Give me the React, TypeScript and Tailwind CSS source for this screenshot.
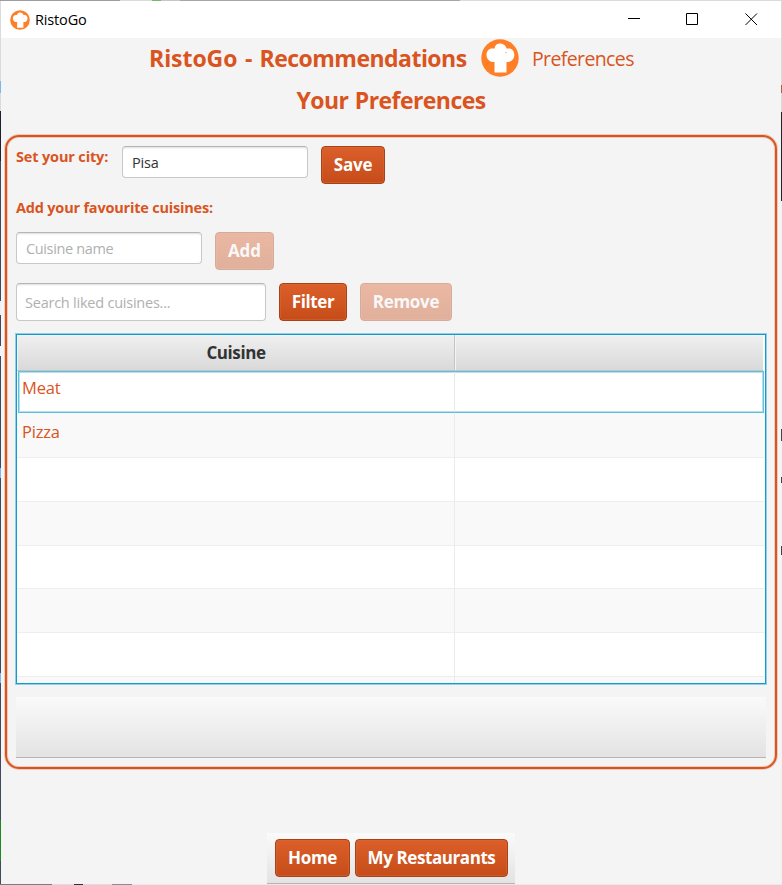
import type { ReactNode } from "react";

function ChefLogo({ className }: { className: string }) {
  return (
    <svg className={className} viewBox="0 0 38 38">
      <circle cx="19" cy="19" r="18.7" fill="#ff7f27" />
      <path
        fill="#fff"
        d="M13.500 33.500V23H11C8 22 5.500 19.500 5.500 16C5.500 12 8 9.500 11 9.500H13.500C14 6.500 16 4.600 19 4.600C22.500 4.600 25 7 25.500 9.500H28C31 9.500 33.300 12 33.300 16C33.300 19.500 31 22.300 27.500 23H25.500V33.500Z"
      />
      <path d="M24.500 13.500h1" stroke="#ff7f27" strokeWidth="1" />
    </svg>
  );
}

const field =
  "border border-[#c8c8c8] border-t-[#b5b5b5] rounded-[4px] bg-white shadow-[inset_0_2px_2px_-1px_#dedede] flex items-center outline-none placeholder:text-[#b0b0b0] text-[#333] text-[14.5px]";

function Btn({ children, className, disabled }: { children: ReactNode; className: string; disabled?: boolean }) {
  return (
    <button
      disabled={disabled}
      className={`h-[38px] shrink-0 whitespace-nowrap rounded-[4px] border border-[#a5421a] bg-linear-to-b from-[#dc5f2a] to-[#c54c19] pb-px text-[17px] font-bold text-white shadow-[inset_0_0_0_1px_#dd673480] disabled:opacity-40 ${className}`}
    >
      {children}
    </button>
  );
}

const rows = [
  { name: "Meat", style: "h-[42px] bg-white" },
  { name: "Pizza", style: "h-[45px] bg-[#f9f9f9] pt-[3px]" },
  { name: "", style: "h-[44px] bg-white" },
  { name: "", style: "h-[44px] bg-[#f9f9f9]" },
  { name: "", style: "h-[43px] bg-white" },
  { name: "", style: "h-[44px] bg-[#f9f9f9]" },
  { name: "", style: "h-[44px] bg-white" },
  { name: "", style: "h-[7px] bg-[#f9f9f9]" },
];

export default function App() {
  return (
    <div className="flex h-[885px] w-[782px] flex-col overflow-hidden bg-[#d9dbdf] font-['Open_Sans','Noto_Sans',sans-serif]">
      <div className="h-px bg-[linear-gradient(90deg,#9b9da2_0_120px,#d9dbdf_120px_152px,#78b86a_152px_161px,#c4c6ca_161px_180px,#a5a7ab_180px_460px,#d9dbdf_460px)]" />
      <div className="flex h-[883px]">
        <div className="w-px bg-[linear-gradient(#d9dbdf_0_80px,#7cb9e8_80px_92px,#d9dbdf_92px_110px,#20202c_110px_160px,#414860_160px_300px,#eee_300px_314px,#414860_314px_345px,#f3f3f3_345px_355px,#414860_355px_467px,#7cb9e8_467px_477px,#414860_477px_672px,#7cb9e8_672px_682px,#414860_682px_819px,#1d8a1d_819px_860px,#414860_860px)]" />
        <div className="flex w-[780px] flex-col bg-[#f4f4f4]">
          <div className="flex h-[37px] shrink-0 items-center bg-white pl-[9px]">
            <ChefLogo className="size-5" />
            <span className="ml-[5px] text-[14.5px] tracking-[-0.15px] text-black">RistoGo</span>
            <svg className="mr-[21px] mb-px ml-auto h-4 w-[134px]" viewBox="0 0 134 16" fill="none" stroke="#000">
              <path d="M2 7.500h12M60.500 2.500h11v11h-11zM119.500 2.500l11.500 11.500M131 2.500L119.500 14" />
            </svg>
          </div>

          <div className="flex h-[42px] shrink-0 items-center pl-[148px] text-[#d9541e]">
            <h1 className="w-[332px] pb-0.5 text-[23px] font-bold tracking-[-0.53px] [word-spacing:2.2px] whitespace-nowrap">
              <span className="tracking-[-0.05px]">RistoGo</span> - Recommendations
            </h1>
            <ChefLogo className="mb-[3px] size-[38px] shrink-0" />
            <span className="ml-[13px] pb-px text-[19.5px] font-normal tracking-[-0.62px]">Preferences</span>
          </div>
          <h2 className="h-[55px] shrink-0 pt-[3px] text-center text-[23px] leading-[34px] font-bold tracking-[-0.56px] [word-spacing:1px] text-[#d9541e]">
            Your Preferences
          </h2>

          <div className="ml-1 flex h-[634px] w-[772px] shrink-0 flex-col rounded-[14px] border-2 border-[#d9541e] pt-[9px] pl-[9px] shadow-[0_0_0_1px_#d9541e40,inset_0_0_0_1px_#d9541e40]">
            <div className="flex h-[52px] items-start">
              <label className="w-[106px] text-[14.500px] leading-[22px] font-bold tracking-[-0.15px] whitespace-nowrap text-[#d9541e]">
                Set your city:
              </label>
              <input className={`${field} h-8 w-[186px] px-[9px] tracking-[-0.2px]`} defaultValue="Pisa" />
              <Btn className="ml-[13px] w-16 tracking-[-0.2px]">Save</Btn>
            </div>
            <label className="h-[34px] text-[14.500px] leading-[20px] font-bold tracking-[-0.2px] whitespace-nowrap text-[#d9541e]">
              Add your favourite cuisines:
            </label>
            <div className="flex h-[51px] items-start">
              <input className={`${field} h-8 w-[186px] px-[9px] tracking-[-0.36px]`} placeholder="Cuisine name" />
              <Btn disabled className="ml-[13px] w-[59px]">Add</Btn>
            </div>
            <div className="flex h-[51px] items-start">
              <input className={`${field} h-[38px] w-[250px] px-2 tracking-[-0.23px]`} placeholder="Search liked cuisines..." />
              <Btn className="ml-[13px] w-[68px] tracking-[-0.4px]">Filter</Btn>
              <Btn disabled className="ml-[13px] w-[92px] tracking-[-0.3px]">Remove</Btn>
            </div>

            <div className="flex h-[350px] w-[750px] shrink-0 flex-col overflow-hidden border border-[#149acb] bg-white shadow-[0_0_0_1px_#8fd0e8]">
              <div className="flex h-9 shrink-0 text-[17px] font-bold text-[#333]">
                <div className="flex w-[438px] items-center justify-center border-r border-b border-[#c4c4c4] bg-linear-to-b from-[#f0f0f0] to-[#d9d9d9] pl-px tracking-[-0.4px] shadow-[inset_1px_1px_0_#f4f4f4]">
                  Cuisine
                </div>
                <div className="mr-0.5 flex-1 border-b border-[#c4c4c4] bg-linear-to-b from-[#f0f0f0] to-[#d9d9d9] shadow-[inset_1px_1px_0_#f4f4f4]" />
              </div>
              {rows.map((r, i) => (
                <div
                  key={i}
                  className={
                    i === 0
                      ? "mx-px flex h-[42px] shrink-0 border border-[#62bfdc] bg-white shadow-[inset_0_0_0_1px_#b5e1ef]"
                      : `flex shrink-0 border-b border-[#eee] ${r.style}`
                  }
                >
                  <div
                    className={
                      i === 0
                        ? "w-[436px] border-r border-[#e8e8e8] pl-[3px] text-[16.5px] leading-8 tracking-[-0.2px] text-[#d9541e]"
                        : "-mt-[3px] w-[438px] border-r border-[#ececec] pt-[3px] pl-[5px] text-[16.5px] leading-8 tracking-[-0.2px] text-[#d9541e]"
                    }
                  >
                    {r.name}
                  </div>
                </div>
              ))}
            </div>
            <div className="mt-[13px] h-[61px] w-[750px] shrink-0 border-b border-[#b5b5b5] bg-linear-to-b from-[#fafafa] to-[#e3e3e3]" />
          </div>

          <div className="mt-[64px] ml-[266px] flex h-[51px] w-[248px] shrink-0 gap-[5px] border-b border-[#b5b5b5] bg-linear-to-b from-[#fafafa] to-[#e3e3e3] pt-1.5 pl-2">
            <Btn className="w-[75px] tracking-[-0.3px]">Home</Btn>
            <Btn className="w-[153px] tracking-[-0.42px]">My Restaurants</Btn>
          </div>
        </div>
        <div className="w-px bg-[linear-gradient(#d9dbdf_0_84px,#a86440_84px_92px,#d9dbdf_92px_111px,#22242c_111px_200px,#f1f1f1_200px_428px,#444_428px_440px,#f1f1f1_440px_476px,#444_476px_482px,#f1f1f1_482px_545px,#444_545px_554px,#f1f1f1_554px)]" />
      </div>
      <div className="h-px bg-[linear-gradient(90deg,#777b88_0_52px,#ddd_52px_74px,#2b3048_74px_83px,#ddd_83px_112px,#8b8b98_112px_132px,#e9e9e9_132px)]" />
    </div>
  );
}
